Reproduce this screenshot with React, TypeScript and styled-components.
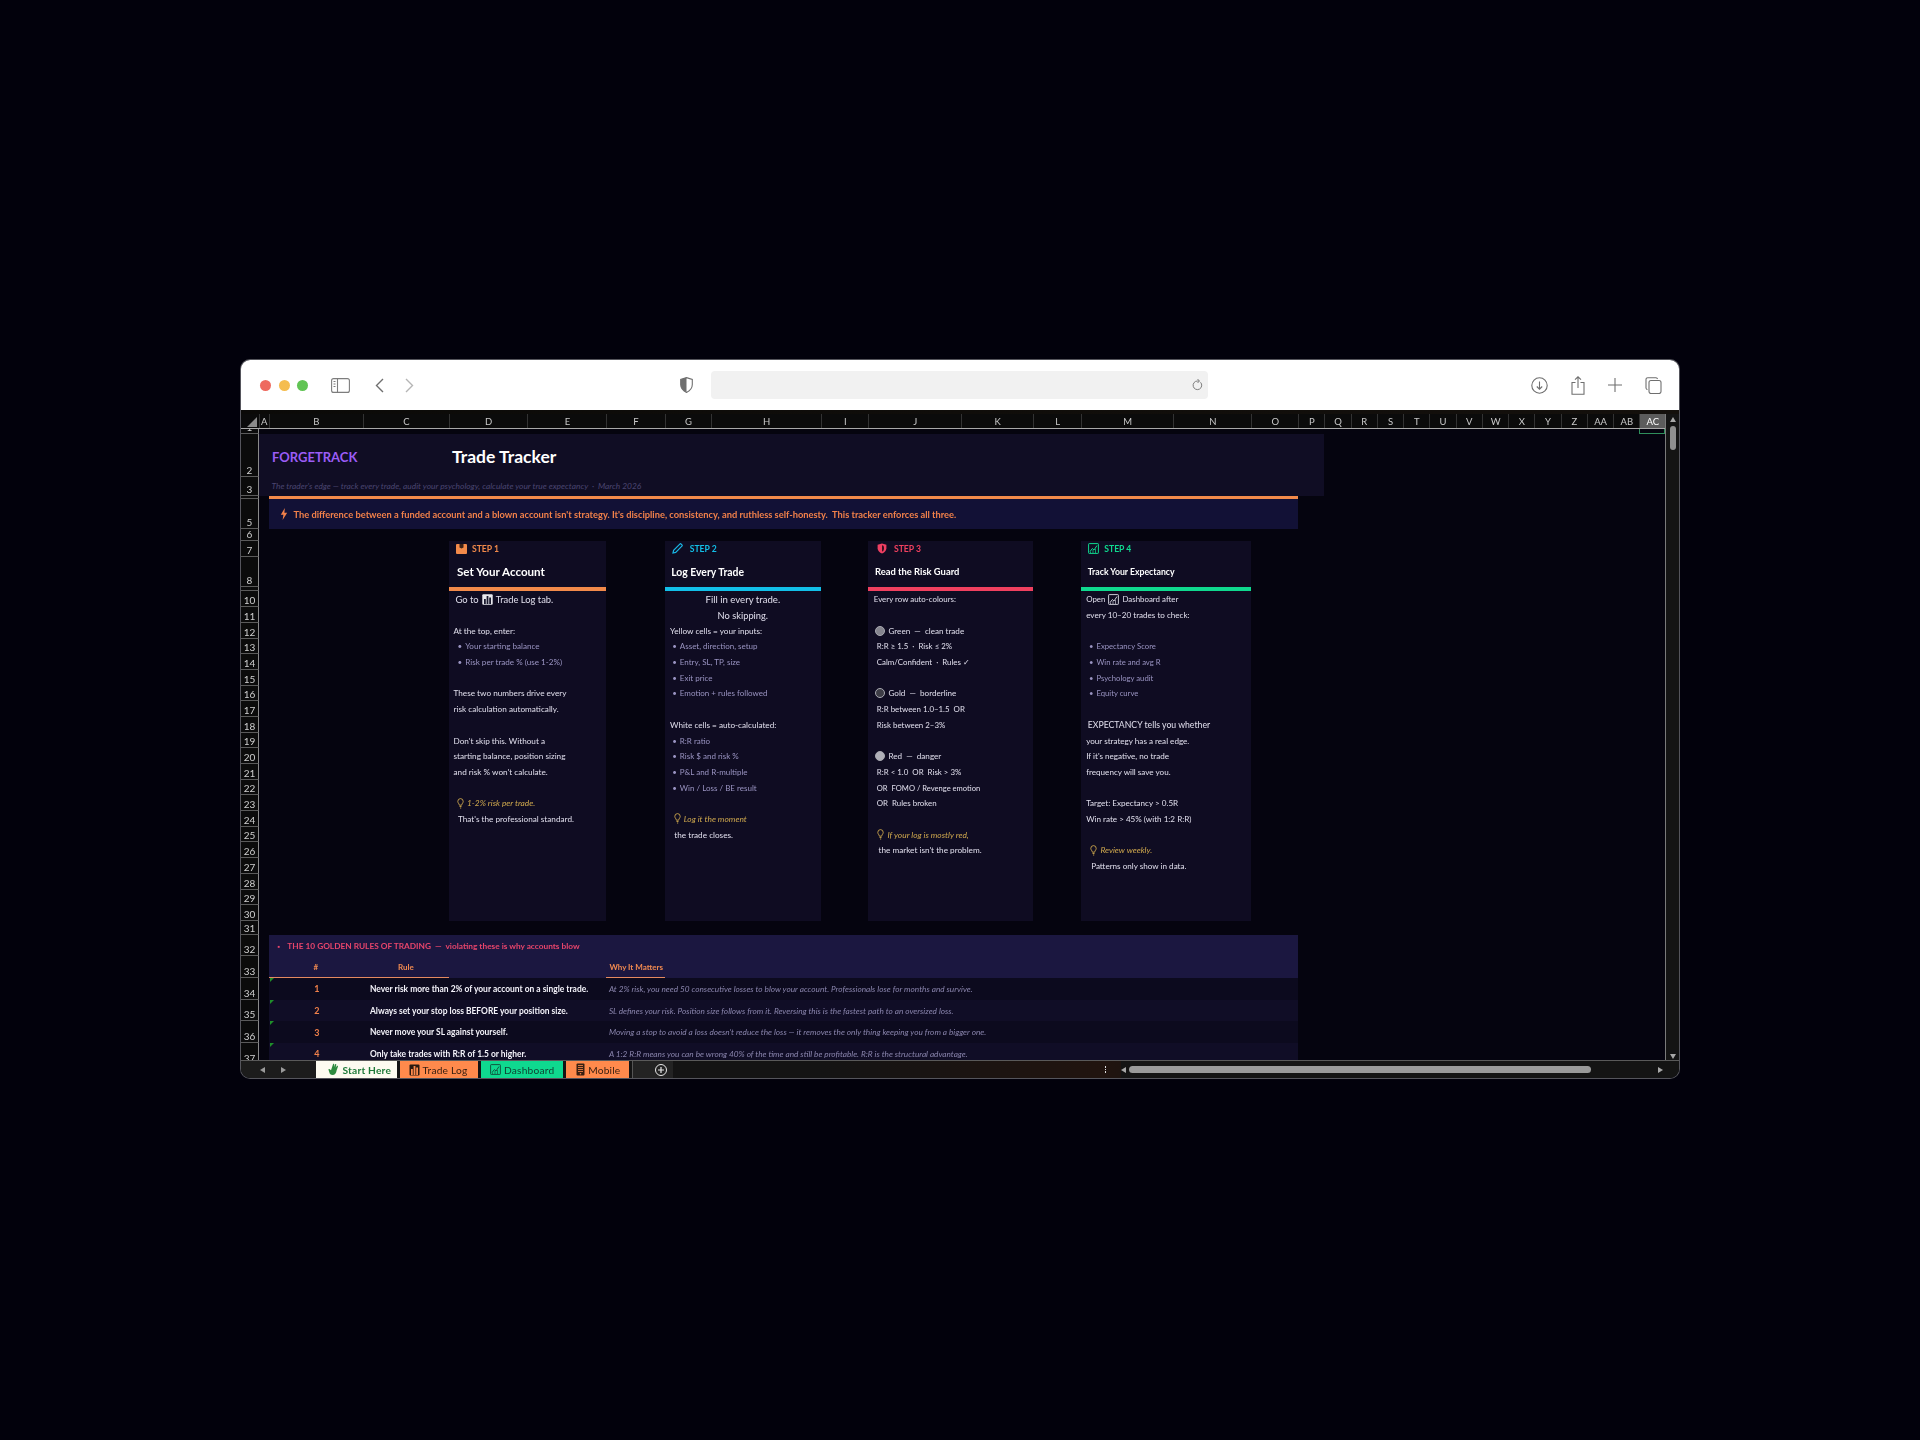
import React from 'react'
import styled, { createGlobalStyle } from 'styled-components'

const GlobalStyle = createGlobalStyle`
html, body {
    margin: 0;
    padding: 0;
    background: #02010c;
    font-family: Lato, "Open Sans", sans-serif;
}
`

const COLUMN_WIDTHS: [string, number][] = [
    ['A', 9.5], ['B', 94.5], ['C', 86], ['D', 78.4], ['E', 79], ['F', 58.3], ['G', 46.8], ['H', 109.5],
    ['I', 47.5], ['J', 92.5], ['K', 72.5], ['L', 47.3], ['M', 92.7], ['N', 78], ['O', 46.9], ['P', 26.1],
    ['Q', 26.25], ['R', 26.25], ['S', 26.25], ['T', 26.25], ['U', 26.25], ['V', 26.25], ['W', 26.25],
    ['X', 26.25], ['Y', 26.25], ['Z', 26.25], ['AA', 26.25], ['AB', 26.25], ['AC', 25.5],
]
const GRID_COLUMNS = `18px ${COLUMN_WIDTHS.map(c => c[1] + 'px').join(' ')}`

const ROW_HEIGHTS = [
    6, 43, 18.7, 3.8, 29.5, 12, 16, 30, 4.5,
    ...Array(21).fill(15.7),
    13.8, 21.7, 21.6, 21.7, 21.7, 21.7, 21.7,
]
const HIDDEN_ROW_LABELS = [4, 9]

const Backdrop = styled.div`
width: 1920px;
height: 1440px;
padding: 360px 0 0 241px;
box-sizing: border-box;
background: #02010c;
`
const Window = styled.div`
width: 1438px;
height: 718px;
display: flex;
flex-direction: column;
border-radius: 9px;
overflow: hidden;
box-shadow: 0 0 0 1px #55555c;
filter: blur(0.35px);
`
const Toolbar = styled.div`
height: 50px;
flex: none;
background: #fff;
display: flex;
align-items: center;
padding-left: 19px;
box-sizing: border-box;
`
const Lights = styled.div`
display: flex;
gap: 7.5px;
margin-right: 23px;
`
const Light = styled.div<{ $color: string }>`
width: 11px;
height: 11px;
border-radius: 50%;
background: ${p => p.$color};
`
const ToolIcon = styled.svg<{ $gap?: number }>`
flex: none;
margin-right: ${p => p.$gap ?? 0}px;
`
const AddressBar = styled.div`
width: 497px;
height: 28px;
flex: none;
background: #f1f1f1;
border-radius: 4px;
display: flex;
align-items: center;
justify-content: flex-end;
padding-right: 5px;
box-sizing: border-box;
margin: 0 18px 0 0;
`
const ToolGroup = styled.div`
margin-left: auto;
display: flex;
align-items: center;
gap: 23px;
padding-right: 17px;
`
const Strip = styled.div`
height: 4px;
flex: none;
background: linear-gradient(90deg, #0b0a08, #14100c);
`
const Workspace = styled.div`
flex: 1;
min-height: 0;
display: flex;
`
const SheetColumn = styled.div`
width: 1424px;
flex: none;
display: flex;
flex-direction: column;
`
const ColumnBar = styled.div`
height: 14px;
flex: none;
display: grid;
grid-template-columns: ${GRID_COLUMNS};
background: #0b0b0b;
border-bottom: 1px solid #a9a9a9;
box-sizing: content-box;
margin-bottom: -1px;
position: relative;
z-index: 1;
`
const Corner = styled.div`
display: flex;
align-items: flex-end;
justify-content: flex-end;
padding: 0 2px 1px 0;
`
const ColumnLabel = styled.div<{ $active?: boolean }>`
display: flex;
align-items: center;
justify-content: center;
font-size: 9.5px;
color: ${p => (p.$active ? '#ffffff' : '#c9c9c9')};
background: ${p => (p.$active ? '#5c5c5c' : 'transparent')};
border-left: 1px solid #333;
overflow: hidden;
`
const Sheet = styled.div`
flex: 1;
min-height: 0;
overflow: hidden;
display: grid;
grid-template-columns: ${GRID_COLUMNS};
grid-template-rows: ${ROW_HEIGHTS.map(h => h + 'px').join(' ')};
background: #05040f;
`
const RowLabel = styled.div<{ $row: number }>`
grid-column: 1;
grid-row: ${p => p.$row};
display: flex;
align-items: flex-end;
justify-content: center;
overflow: hidden;
background: #0b0b0b;
border-right: 1px solid #8a8a8a;
border-bottom: 1px solid #5b5b5b;
box-sizing: border-box;
color: #cfcfcf;
font-size: 10px;
line-height: 12px;
`
const Band = styled.div<{ $row: string | number; $col: string; $bg: string }>`
grid-row: ${p => p.$row};
grid-column: ${p => p.$col};
background: ${p => p.$bg};
`
const Cell = styled.div<{ $row: number; $col: string; $indent?: number; $center?: boolean }>`
grid-row: ${p => p.$row};
grid-column: ${p => p.$col};
display: flex;
align-items: center;
justify-content: ${p => (p.$center ? 'center' : 'flex-start')};
padding-left: ${p => p.$indent ?? 0}px;
white-space: nowrap;
min-width: 0;
`
const Brand = styled.span`
font-size: 13px;
font-weight: 700;
color: #9b5cf6;
margin-top: 2px;
`
const PageTitle = styled.span`
font-size: 17.5px;
font-weight: 700;
color: #fff;
margin-top: 2px;
`
const Tagline = styled.span`
font-size: 8.4px;
font-style: italic;
color: #4a4570;
white-space: pre;
`
const BannerText = styled.span`
font-size: 9.3px;
font-weight: 700;
color: #f2814a;
margin-left: 6px;
white-space: pre;
`
const SelectedCell = styled.div`
grid-row: 1;
grid-column: 30;
border: 1px solid #2f8f5b;
border-top-color: #ddd;
box-sizing: border-box;
`

const Card = styled.div<{ $col: string }>`
grid-row: 7 / 31;
grid-column: ${p => p.$col};
display: grid;
grid-template-rows: subgrid;
background: #0f0c22;
min-width: 0;
`
const StepRow = styled.div<{ $indent: number; $color: string; $gap: number }>`
grid-row: 1;
display: flex;
align-items: center;
gap: ${p => p.$gap}px;
padding-left: ${p => p.$indent}px;
color: ${p => p.$color};
font-size: 8.6px;
font-weight: 700;
`
const CardTitle = styled.div<{ $indent: number; $size: number }>`
grid-row: 2;
display: flex;
align-items: center;
padding-left: ${p => p.$indent}px;
color: #fff;
font-size: ${p => p.$size}px;
font-weight: 700;
white-space: nowrap;
`
const CardBar = styled.div<{ $color: string }>`
grid-row: 3;
background: ${p => p.$color};
`
const Line = styled.div<{ $indent?: number; $center?: boolean; $size: number; $color?: string; $italic?: boolean }>`
display: flex;
align-items: center;
gap: 3px;
justify-content: ${p => (p.$center ? 'center' : 'flex-start')};
padding-left: ${p => p.$indent ?? 0}px;
font-size: ${p => p.$size}px;
color: ${p => p.$color ?? '#e0deec'};
font-style: ${p => (p.$italic ? 'italic' : 'normal')};
white-space: pre;
min-width: 0;
`
const Dot = styled.span<{ $color: string }>`
width: 8px;
height: 8px;
border-radius: 50%;
background: ${p => p.$color};
border: 1px solid #a9a9b2;
flex: none;
`
const SectionTitle = styled.span`
font-size: 8.3px;
font-weight: 700;
color: #e8456b;
white-space: pre;
`
const SectionMark = styled.span`
font-size: 7px;
color: #e8456b;
margin-right: 7px;
`
const HeadLabel = styled.span`
font-size: 8px;
font-weight: 700;
color: #f08a50;
`
const Underline = styled.div<{ $col: string }>`
grid-row: 33;
grid-column: ${p => p.$col};
align-self: end;
height: 1.5px;
background: #e58a60;
`
const RuleNumber = styled.span`
font-size: 9px;
font-weight: 700;
color: #f2814a;
margin-left: 2px;
`
const RuleText = styled.span`
font-size: 8.45px;
font-weight: 700;
color: #f4f3fa;
`
const WhyText = styled.span`
font-size: 8.25px;
font-style: italic;
color: #8a85ad;
`
const CornerMark = styled.div<{ $row: number }>`
grid-row: ${p => p.$row};
grid-column: 3;
width: 0;
height: 0;
margin-left: 1px;
border-top: 4px solid #1f8f2a;
border-right: 4px solid transparent;
`

const VScroll = styled.div`
flex: 1;
display: flex;
flex-direction: column;
align-items: center;
background: #141414;
border-left: 1px solid #7a7a7a;
box-sizing: border-box;
padding: 3px 0 1px;
`
const VThumb = styled.div`
width: 6px;
height: 24px;
margin-top: 4px;
border-radius: 3px;
background: #8f8f8f;
`
const Arrow = styled.div<{ $dir: 'up' | 'down' | 'left' | 'right'; $color?: string }>`
width: 0;
height: 0;
flex: none;
${p => {
    const c = p.$color ?? '#a8a8a8'
    if (p.$dir === 'up') return `border-left:3.5px solid transparent;border-right:3.5px solid transparent;border-bottom:5px solid ${c};`
    if (p.$dir === 'down') return `border-left:3.5px solid transparent;border-right:3.5px solid transparent;border-top:5px solid ${c};`
    if (p.$dir === 'left') return `border-top:3.5px solid transparent;border-bottom:3.5px solid transparent;border-right:5px solid ${c};`
    return `border-top:3.5px solid transparent;border-bottom:3.5px solid transparent;border-left:5px solid ${c};`
}}
`
const Spacer = styled.div`
flex: 1;
`
const TabBar = styled.div`
height: 18px;
flex: none;
display: flex;
align-items: stretch;
background: linear-gradient(90deg, #141414 40%, #21140f 60%, #141414 66%);
border-top: 1px solid #5a5a5a;
box-sizing: border-box;
`
const TabNav = styled.div`
width: 74.5px;
flex: none;
display: flex;
align-items: center;
gap: 16px;
padding-left: 19px;
box-sizing: border-box;
background: #1c1c1c;
`
const Tab = styled.div<{ $bg: string; $color: string; $width: number; $bold?: boolean; $left: number }>`
width: ${p => p.$width}px;
flex: none;
margin-right: 2.5px;
display: flex;
align-items: center;
gap: 3px;
padding-left: ${p => p.$left}px;
box-sizing: border-box;
background: ${p => p.$bg};
color: ${p => p.$color};
font-size: 10.2px;
letter-spacing: 0.2px;
font-weight: ${p => (p.$bold ? 700 : 400)};
`
const AddTab = styled.div`
width: 41px;
flex: none;
margin-left: 1px;
display: flex;
align-items: center;
justify-content: center;
background: #232323;
border-left: 1px solid #555;
padding-left: 16px;
box-sizing: border-box;
`
const Dots = styled.div`
margin-left: auto;
display: flex;
flex-direction: column;
justify-content: center;
gap: 1px;
margin-right: 15px;
`
const TinyDot = styled.div`
width: 1.5px;
height: 1.5px;
background: #ddd;
`
const HTrack = styled.div`
width: 558px;
flex: none;
display: flex;
align-items: center;
padding-right: 16px;
box-sizing: border-box;
background: #141414;
`
const HThumb = styled.div`
width: 462px;
height: 7px;
margin-left: 3px;
border-radius: 4px;
background: #9a9a9a;
`

const Bulb = () => (
    <svg width="7" height="11" viewBox="0 0 7 11" fill="none" stroke="#d0a94e" strokeWidth="0.9">
        <path d="M3.5 .6A2.8 2.8 0 0 1 6.2 3.4c0 1.4-1.3 2.2-1.6 3.8H2.4C2.1 5.6.8 4.8.8 3.4A2.8 2.8 0 0 1 3.5.6Z" />
        <path d="M2.5 8.5h2M3 10h1.2" />
    </svg>
)

const BarChartIcon = () => (
    <svg width="11" height="11" viewBox="0 0 11 11">
        <rect x="0.3" y="0.3" width="10.4" height="10.4" rx="1" fill="#e8e8ee" />
        <rect x="2" y="5" width="1.8" height="5" fill="#1a1a2e" />
        <rect x="4.6" y="2" width="1.8" height="8" fill="#1a1a2e" />
        <rect x="7.2" y="3.5" width="1.8" height="6.5" fill="#1a1a2e" />
    </svg>
)

const ChartBox = ({ color, size }: { color: string; size: number }) => (
    <svg width={size} height={size} viewBox="0 0 11 11" fill="none" stroke={color} strokeWidth="1">
        <rect x="0.6" y="0.6" width="9.8" height="9.8" rx="0.6" />
        <path d="M2 8.5 4.4 5.5 6 7 9 2.5" />
        <path d="M2.5 10V8.5M5 10V7M7.5 10V6" strokeWidth="0.7" />
    </svg>
)

const StepOneIcon = () => (
    <svg width="11" height="10" viewBox="0 0 11 10">
        <rect width="11" height="10" rx="1" fill="#f28a4a" />
        <path d="M3.5 0h4v3.4l-2 1.2-2-1.2Z" fill="#3a2016" />
    </svg>
)
const StepTwoIcon = () => (
    <svg width="11" height="11" viewBox="0 0 11 11" fill="none" stroke="#19b7e6" strokeWidth="1.2">
        <path d="M1 10 1.6 7.3 7.8 1.1a1 1 0 0 1 1.4 0l.7.7a1 1 0 0 1 0 1.4L3.7 9.4Z" />
    </svg>
)
const StepThreeIcon = () => (
    <svg width="10" height="11" viewBox="0 0 10 11">
        <path d="M5 .4 9.4 1.7v3.6C9.4 8 7.3 9.7 5 10.6 2.700 9.700.6 8 .6 5.300V1.700Z" fill="#ee3f62" />
        <path d="M5 2.200c1.500 0 2 1.200 2 3s-.6 3-2 3.300Z" fill="#3a0f20" />
    </svg>
)
const BoltIcon = () => (
    <svg width="8" height="12" viewBox="0 0 8 12">
        <path d="M4.800 0 .8 6.800h2.600L2.600 12l4.600-7.200H4.400Z" fill="#f2814a" />
    </svg>
)
const HandIcon = () => (
    <svg width="12" height="13" viewBox="0 0 12 13">
        <path d="M5 1.200c.5-.8 1.400-.4 1.300.5l-.2 2.400 1-2.600c.4-.8 1.400-.4 1.200.5l-.7 2.800 1.300-1.700c.6-.6 1.400 0 1 .7L8.600 7.500c-.3 2.600-1.700 4.500-4 4.500-2 0-3-1-3.200-2.400L0.500 6.800c-.2-.8.700-1.200 1.200-.6L3 7.300Z" fill="#2e8b3f" />
    </svg>
)
const BarTabIcon = () => (
    <svg width="11" height="12" viewBox="0 0 11 12">
        <rect x="0.5" y="0.5" width="10" height="11" rx="1" fill="#2a1a10" />
        <rect x="2" y="5" width="1.8" height="6" fill="#ff8a4c" />
        <rect x="4.6" y="2" width="1.8" height="9" fill="#ff8a4c" />
        <rect x="7.2" y="3.5" width="1.8" height="7.5" fill="#ff8a4c" />
    </svg>
)
const PhoneIcon = () => (
    <svg width="9" height="13" viewBox="0 0 9 13">
        <rect x="0.5" y="0.5" width="8" height="12" rx="1" fill="#3a2012" />
        <path d="M2 2.500h5M2 4.500h5M2 6.500h5M2 8.500h5" stroke="#ff8a4c" strokeWidth="0.8" />
        <circle cx="4.5" cy="10.7" r="0.8" fill="#ff8a4c" />
    </svg>
)

type LineData = {
    text?: string
    indent?: number
    center?: boolean
    size?: number
    kind?: 'bullet' | 'tip' | 'dot'
    dot?: string
    icon?: 'bars' | 'chart'
    after?: string
}

const MUTED = '#9a94c2'
const GOLD = '#d0a94e'
const TIP_SIZE = 8.4

const bullets = (items: string[], indent: number): LineData[] =>
    items.map(text => ({ text, indent, kind: 'bullet' as const }))
const plain = (items: string[], indent: number): LineData[] =>
    items.map(text => ({ text, indent }))
const blank: LineData = {}

const CARDS = [
    {
        col: '5 / 7', color: '#f28a4a', step: 'STEP 1', stepIndent: 7, stepGap: 5, icon: <StepOneIcon />,
        title: 'Set Your Account', titleIndent: 8, titleSize: 11.6,
        bodySize: 8.2, bulletSize: 8.1,
        lines: [
            { text: 'Go to', icon: 'bars', after: 'Trade Log tab.', indent: 6.5, size: 9.4 },
            blank,
            ...plain(['At the top, enter:'], 4.5),
            ...bullets(['Your starting balance', 'Risk per trade % (use 1-2%)'], 8.5),
            blank,
            ...plain(['These two numbers drive every', 'risk calculation automatically.'], 4.5),
            blank,
            ...plain(["Don't skip this. Without a", 'starting balance, position sizing', "and risk % won't calculate."], 4.5),
            blank,
            { text: '1-2% risk per trade.', kind: 'tip', indent: 8 },
            ...plain(["That's the professional standard."], 9),
        ] as LineData[],
    },
    {
        col: '8 / 10', color: '#12bfe8', step: 'STEP 2', stepIndent: 7, stepGap: 7, icon: <StepTwoIcon />,
        title: 'Log Every Trade', titleIndent: 6.5, titleSize: 10.4,
        bodySize: 8.2, bulletSize: 8,
        lines: [
            { text: 'Fill in every trade.', center: true, size: 9.6 },
            { text: 'No skipping.', center: true, size: 9.3 },
            ...plain(['Yellow cells = your inputs:'], 5.4),
            ...bullets(['Asset, direction, setup', 'Entry, SL, TP, size', 'Exit price', 'Emotion + rules followed'], 7.5),
            blank,
            ...plain(['White cells = auto-calculated:'], 5.4),
            ...bullets(['R:R ratio', 'Risk $ and risk %', 'P&L and R-multiple', 'Win / Loss / BE result'], 7.5),
            blank,
            { text: 'Log it the moment', kind: 'tip', indent: 9 },
            ...plain(['the trade closes.'], 9.6),
        ] as LineData[],
    },
    {
        col: '11 / 13', color: '#f0405f', step: 'STEP 3', stepIndent: 8.5, stepGap: 7, icon: <StepThreeIcon />,
        title: 'Read the Risk Guard', titleIndent: 6.5, titleSize: 9.4,
        bodySize: 7.9, bulletSize: 7.9,
        lines: [
            ...plain(['Every row auto-colours:'], 5.3),
            blank,
            { text: 'Green  —  clean trade', kind: 'dot', dot: '#85858e', indent: 7 },
            ...plain(['R:R ≥ 1.5  ·  Risk ≤ 2%', 'Calm/Confident  ·  Rules ✓'], 8.3),
            blank,
            { text: 'Gold  —  borderline', kind: 'dot', dot: '#3d3d46', indent: 7 },
            ...plain(['R:R between 1.0–1.5  OR', 'Risk between 2–3%'], 8.3),
            blank,
            { text: 'Red  —  danger', kind: 'dot', dot: '#b0b0b8', indent: 7 },
            ...plain(['R:R < 1.0  OR  Risk > 3%'], 8.3),
            { text: 'OR  FOMO / Revenge emotion', indent: 8.3, size: 7.6 },
            ...plain(['OR  Rules broken'], 8.3),
            blank,
            { text: 'If your log is mostly red,', kind: 'tip', indent: 9 },
            { text: "the market isn't the problem.", indent: 10, size: 8.2 },
        ] as LineData[],
    },
    {
        col: '14 / 16', color: '#0fd98f', step: 'STEP 4', stepIndent: 7.5, stepGap: 5, icon: <ChartBox color="#0fd98f" size={11} />,
        title: 'Track Your Expectancy', titleIndent: 7, titleSize: 8.7,
        bodySize: 8.1, bulletSize: 7.7,
        lines: [
            { text: 'Open', icon: 'chart', after: 'Dashboard after', indent: 5.4, size: 7.9 },
            ...plain(['every 10–20 trades to check:'], 5.4),
            blank,
            ...bullets(['Expectancy Score', 'Win rate and avg R', 'Psychology audit', 'Equity curve'], 8.2),
            blank,
            { text: 'EXPECTANCY tells you whether', indent: 7, size: 8.7 },
            ...plain(['your strategy has a real edge.', "If it's negative, no trade", 'frequency will save you.'], 5.4),
            blank,
            ...plain(['Target: Expectancy > 0.5R', 'Win rate > 45% (with 1:2 R:R)'], 5.4),
            blank,
            { text: 'Review weekly.', kind: 'tip', indent: 9.6 },
            ...plain(['Patterns only show in data.'], 10.4),
        ] as LineData[],
    },
]

const RULES = [
    ['Never risk more than 2% of your account on a single trade.', 'At 2% risk, you need 50 consecutive losses to blow your account. Professionals lose for months and survive.'],
    ['Always set your stop loss BEFORE your position size.', 'SL defines your risk. Position size follows from it. Reversing this is the fastest path to an oversized loss.'],
    ['Never move your SL against yourself.', "Moving a stop to avoid a loss doesn't reduce the loss — it removes the only thing keeping you from a bigger one."],
    ['Only take trades with R:R of 1.5 or higher.', 'A 1:2 R:R means you can be wrong 40% of the time and still be profitable. R:R is the structural advantage.'],
]

const CardLine = ({ line, bodySize, bulletSize }: { line: LineData; bodySize: number; bulletSize: number }) => {
    if (line.kind === 'bullet') {
        return (
            <Line $indent={line.indent} $color={MUTED} $size={bulletSize}>
                <span>•</span> {line.text}
            </Line>
        )
    }
    if (line.kind === 'tip') {
        return (
            <Line $indent={line.indent} $color={GOLD} $size={TIP_SIZE} $italic>
                <Bulb /> {line.text}
            </Line>
        )
    }
    if (line.kind === 'dot') {
        return (
            <Line $indent={line.indent} $size={8.1}>
                <Dot $color={line.dot as string} />{line.text}
            </Line>
        )
    }
    return (
        <Line $indent={line.indent} $center={line.center} $size={line.size ?? bodySize}>
            {line.text}
            {line.icon === 'bars' && <BarChartIcon />}
            {line.icon === 'chart' && <ChartBox color="#c9c9d4" size={11} />}
            {line.after}
        </Line>
    )
}

const App = () => {
    const rowLabels = ROW_HEIGHTS.map((_, i) => i + 1)

    return (
        <Backdrop>
            <GlobalStyle />
            <Window>
                <Toolbar>
                    <Lights>
                        <Light $color="#ee6a5f" />
                        <Light $color="#f5bd4f" />
                        <Light $color="#61c454" />
                    </Lights>
                    <ToolIcon $gap={25} width="19" height="15" viewBox="0 0 19 15" fill="none" stroke="#7d7d7d" strokeWidth="1.1">
                        <rect x="0.6" y="0.6" width="17.8" height="13.8" rx="2" />
                        <path d="M6.5 .6v13.8M2.5 3.5h2M2.5 6h2M2.5 8.5h2" />
                    </ToolIcon>
                    <ToolIcon $gap={21} width="9" height="15" viewBox="0 0 9 15" fill="none" stroke="#6f6f6f" strokeWidth="1.4">
                        <path d="M8 1 1.5 7.5 8 14" />
                    </ToolIcon>
                    <ToolIcon $gap={266} width="9" height="15" viewBox="0 0 9 15" fill="none" stroke="#b5b5b5" strokeWidth="1.4">
                        <path d="M1 1 7.5 7.5 1 14" />
                    </ToolIcon>
                    <ToolIcon $gap={18} width="13" height="16" viewBox="0 0 13 16">
                        <path d="M6.5 .6 12.3 2.4v5.2c0 3.6-2.6 6.300-5.800 7.800C3.300 13.900.7 11.200.7 7.600V2.400Z" fill="#fff" stroke="#6f6f6f" strokeWidth="1.1" />
                        <path d="M6.5 .6v14.800C3.300 13.900.7 11.200.7 7.600V2.400Z" fill="#6f6f6f" />
                    </ToolIcon>
                    <AddressBar>
                        <svg width="11" height="14" viewBox="0 0 11 14" fill="none" stroke="#7d7d7d" strokeWidth="1">
                            <path d="M8.5 4.300A4.300 4.300 0 1 1 5.500 3H7M5.500 1l2 2-2 2" />
                        </svg>
                    </AddressBar>
                    <ToolGroup>
                        <svg width="17" height="17" viewBox="0 0 17 17" fill="none" stroke="#6f6f6f" strokeWidth="1.1">
                            <circle cx="8.5" cy="8.5" r="7.7" />
                            <path d="M8.5 4.5v7.5M5.8 9.5l2.700 2.700 2.700-2.700" />
                        </svg>
                        <svg width="14" height="19" viewBox="0 0 14 19" fill="none" stroke="#6f6f6f" strokeWidth="1.1">
                            <path d="M4.500 6.500H1v11.800h12V6.500H9.500M7 12V.8M4 3.600 7 .8l3 2.800" />
                        </svg>
                        <svg width="14" height="14" viewBox="0 0 14 14" fill="none" stroke="#6f6f6f" strokeWidth="1.1">
                            <path d="M7 0v14M0 7h14" />
                        </svg>
                        <svg width="17" height="17" viewBox="0 0 17 17" fill="none" stroke="#6f6f6f" strokeWidth="1.1">
                            <rect x="4" y="3.5" width="12" height="13" rx="2" />
                            <path d="M2.500 12.500A1.700 1.700 0 0 1 1 11V2.500A1.800 1.800 0 0 1 2.800.7H11a1.700 1.700 0 0 1 1.500 1.300" />
                        </svg>
                    </ToolGroup>
                </Toolbar>
                <Strip />
                <Workspace>
                    <SheetColumn>
                        <ColumnBar>
                            <Corner>
                                <svg width="10" height="10" viewBox="0 0 10 10">
                                    <path d="M10 0v10H0Z" fill="#8a8a8a" />
                                </svg>
                            </Corner>
                            {COLUMN_WIDTHS.map(([name]) => (
                                <ColumnLabel key={name} $active={name === 'AC'}>{name}</ColumnLabel>
                            ))}
                        </ColumnBar>
                        <Sheet>
                            {rowLabels.map(row => (
                                <RowLabel key={row} $row={row}>
                                    {HIDDEN_ROW_LABELS.includes(row) ? '' : row}
                                </RowLabel>
                            ))}
                            <SelectedCell />

                            <Band $row="2 / 4" $col="2 / 18" $bg="#100d24" />
                            <Cell $row={2} $col="3 / 5" $indent={3.5}><Brand>FORGETRACK</Brand></Cell>
                            <Cell $row={2} $col="5 / 9" $indent={3}><PageTitle>Trade Tracker</PageTitle></Cell>
                            <Cell $row={3} $col="3 / 12" $indent={3}>
                                <Tagline>The trader's edge — track every trade, audit your psychology, calculate your true expectancy  ·  March 2026</Tagline>
                            </Cell>

                            <Band $row={4} $col="3 / 17" $bg="#f28a4a" />
                            <Band $row={5} $col="3 / 17" $bg="#121136" />
                            <Cell $row={5} $col="3 / 17" $indent={11}>
                                <BoltIcon />
                                <BannerText>The difference between a funded account and a blown account isn't strategy. It's discipline, consistency, and ruthless self-honesty.  This tracker enforces all three.</BannerText>
                            </Cell>

                            {CARDS.map(card => (
                                <Card key={card.step} $col={card.col}>
                                    <StepRow $indent={card.stepIndent} $gap={card.stepGap} $color={card.color}>
                                        {card.icon}
                                        {card.step}
                                    </StepRow>
                                    <CardTitle $indent={card.titleIndent} $size={card.titleSize}>{card.title}</CardTitle>
                                    <CardBar $color={card.color} />
                                    {card.lines.map((line, i) => (
                                        <CardLine key={i} line={line} bodySize={card.bodySize} bulletSize={card.bulletSize} />
                                    ))}
                                </Card>
                            ))}

                            <Band $row="32 / 34" $col="3 / 17" $bg="#1b1740" />
                            <Cell $row={32} $col="3 / 17" $indent={9}>
                                <SectionMark>▪</SectionMark>
                                <SectionTitle>THE 10 GOLDEN RULES OF TRADING  —  violating these is why accounts blow</SectionTitle>
                            </Cell>
                            <Cell $row={33} $col="3" $center><HeadLabel>#</HeadLabel></Cell>
                            <Cell $row={33} $col="4" $center><HeadLabel>Rule</HeadLabel></Cell>
                            <Cell $row={33} $col="7 / 9" $indent={3}><HeadLabel>Why It Matters</HeadLabel></Cell>
                            <Underline $col="3 / 5" />
                            <Underline $col="7" />

                            {RULES.map(([rule, why], i) => (
                                <React.Fragment key={rule}>
                                    <Band $row={34 + i} $col="3 / 17" $bg={i % 2 ? '#100d26' : '#0c0a1e'} />
                                    <CornerMark $row={34 + i} />
                                    <Cell $row={34 + i} $col="3" $center><RuleNumber>{i + 1}</RuleNumber></Cell>
                                    <Cell $row={34 + i} $col="4 / 7" $indent={7}><RuleText>{rule}</RuleText></Cell>
                                    <Cell $row={34 + i} $col="7 / 17" $indent={2.5}><WhyText>{why}</WhyText></Cell>
                                </React.Fragment>
                            ))}
                        </Sheet>
                    </SheetColumn>
                    <VScroll>
                        <Arrow $dir="up" />
                        <VThumb />
                        <Spacer />
                        <Arrow $dir="down" />
                    </VScroll>
                </Workspace>
                <TabBar>
                    <TabNav>
                        <Arrow $dir="left" $color="#9a9a9a" />
                        <Arrow $dir="right" $color="#9a9a9a" />
                    </TabNav>
                    <Tab $bg="#fdfbf0" $color="#1f7a3a" $width={81.5} $left={12} $bold><HandIcon />Start Here</Tab>
                    <Tab $bg="#ff8a4c" $color="#3a2012" $width={78.5} $left={9}><BarTabIcon />Trade Log</Tab>
                    <Tab $bg="#0fd98f" $color="#0f3f30" $width={82.7} $left={9.5}><ChartBox color="#0f5a42" size={11} />Dashboard</Tab>
                    <Tab $bg="#ff8a4c" $color="#3a2012" $width={63.3} $left={10.5}><PhoneIcon />Mobile</Tab>
                    <AddTab>
                        <svg width="12" height="12" viewBox="0 0 12 12">
                            <circle cx="6" cy="6" r="5.5" fill="none" stroke="#e8e8e8" strokeWidth="1" />
                            <path d="M6 3v6M3 6h6" stroke="#e8e8e8" strokeWidth="1.2" />
                        </svg>
                    </AddTab>
                    <Dots>
                        <TinyDot />
                        <TinyDot />
                        <TinyDot />
                    </Dots>
                    <HTrack>
                        <Arrow $dir="left" />
                        <HThumb />
                        <Spacer />
                        <Arrow $dir="right" />
                    </HTrack>
                </TabBar>
            </Window>
        </Backdrop>
    )
}

export default App
